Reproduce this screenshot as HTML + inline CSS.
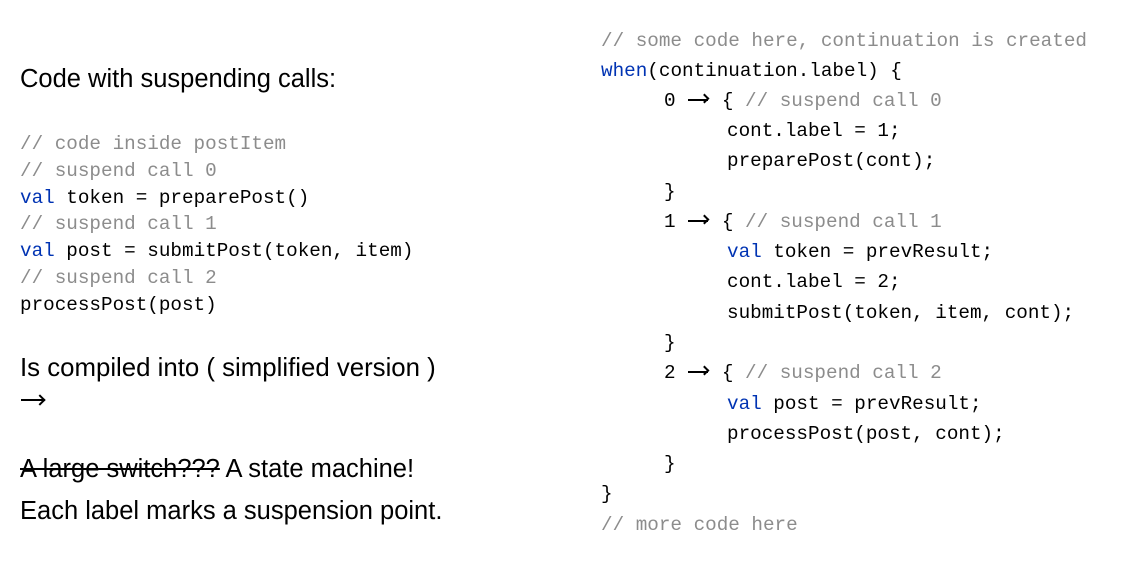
<!DOCTYPE html>
<html><head><meta charset="utf-8"><style>
body{margin:0;width:1144px;height:564px;background:#fff;position:relative;overflow:hidden;color:#000}
.s{position:absolute;font-family:"Liberation Sans",sans-serif;font-size:25.5px;white-space:nowrap;line-height:30px}
.m{position:absolute;font-family:"Liberation Mono",monospace;font-size:19.3px;white-space:pre;line-height:30px}
.c{color:#8c8c8c}.k{color:#0033b3}
.a{position:absolute;left:24px;top:13px;width:20px;height:2px;background:#000}
.a:after{content:"";position:absolute;right:0;top:-4px;width:7px;height:7px;border-top:2px solid #000;border-right:2px solid #000;transform:rotate(45deg);transform-origin:center;box-sizing:border-box;right:0px}
</style></head><body>
<div class="s" style="left:20px;top:64px">Code with suspending calls:</div>
<div class="m" style="left:20px;top:131px;line-height:26.8px"><span class="c">// code inside postItem</span>
<span class="c">// suspend call 0</span>
<span class="k">val</span> token = preparePost()
<span class="c">// suspend call 1</span>
<span class="k">val</span> post = submitPost(token, item)
<span class="c">// suspend call 2</span>
processPost(post)</div>
<div class="s" style="left:20px;top:353px;font-size:25.8px">Is compiled into ( simplified version )</div>
<div style="position:absolute;left:21px;top:399px;width:22px;height:2px;background:#000"></div>
<div style="position:absolute;left:36px;top:396px;width:6px;height:6px;border-top:2px solid #000;border-right:2px solid #000;transform:rotate(45deg)"></div>
<div class="s" style="left:20px;top:454px"><span style="text-decoration:line-through">A large switch???</span> A state machine!</div>
<div class="s" style="left:20px;top:496px">Each label marks a suspension point.</div>

<div class="m" style="left:601px;top:26px"><span class="c">// some code here, continuation is created</span></div>
<div class="m" style="left:601px;top:56px"><span class="k">when</span>(continuation.label) {</div>
<div class="m" style="left:664px;top:86px">0    { <span class="c">// suspend call 0</span><div class="a"></div></div>
<div class="m" style="left:727px;top:116px">cont.label = 1;</div>
<div class="m" style="left:727px;top:146px">preparePost(cont);</div>
<div class="m" style="left:664px;top:177px">}</div>
<div class="m" style="left:664px;top:207px">1    { <span class="c">// suspend call 1</span><div class="a"></div></div>
<div class="m" style="left:727px;top:237px"><span class="k">val</span> token = prevResult;</div>
<div class="m" style="left:727px;top:267px">cont.label = 2;</div>
<div class="m" style="left:727px;top:298px">submitPost(token, item, cont);</div>
<div class="m" style="left:664px;top:328px">}</div>
<div class="m" style="left:664px;top:358px">2    { <span class="c">// suspend call 2</span><div class="a"></div></div>
<div class="m" style="left:727px;top:389px"><span class="k">val</span> post = prevResult;</div>
<div class="m" style="left:727px;top:419px">processPost(post, cont);</div>
<div class="m" style="left:664px;top:449px">}</div>
<div class="m" style="left:601px;top:479px">}</div>
<div class="m" style="left:601px;top:510px"><span class="c">// more code here</span></div>
</body></html>
